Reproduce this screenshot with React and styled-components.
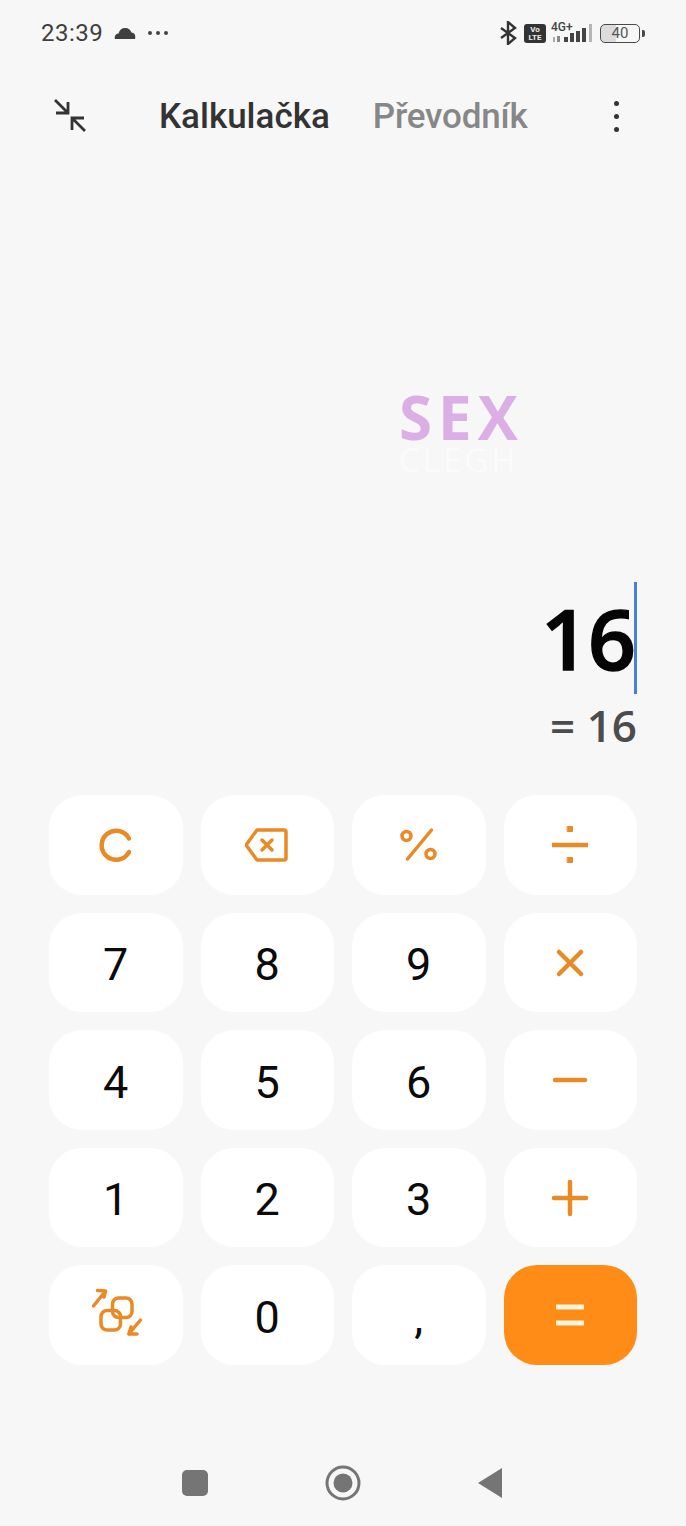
import React from 'react';
import styled, { createGlobalStyle } from 'styled-components';

const orange = '#e98a24';

const GlobalStyle = createGlobalStyle`
  html, body {
    margin: 0;
    padding: 0;
    background: #f7f7f7;
  }
  * {
    box-sizing: border-box;
  }
`;

const Screen = styled.div`
  width: 686px;
  height: 1526px;
  background: #f7f7f7;
  display: flex;
  flex-direction: column;
  font-family: Roboto, "Noto Sans", sans-serif;
  overflow: hidden;
`;

const StatusBar = styled.div`
  height: 66px;
  padding: 0 41px 0 41px;
  display: flex;
  align-items: center;
  justify-content: space-between;
`;

const StatusGroup = styled.div`
  display: flex;
  align-items: center;
  gap: ${(p) => p.$gap || 8}px;
`;

const Clock = styled.span`
  font-size: 24px;
  color: #3f3f3f;
  letter-spacing: 0.5px;
`;

const Battery = styled.div`
  width: 40px;
  height: 19px;
  border: 1.6px solid #4a4a4a;
  border-radius: 5px;
  display: flex;
  align-items: center;
  justify-content: center;
  font-size: 15px;
  color: #555;
  background: linear-gradient(90deg, #dcdcdc 40%, #f7f7f7 40%);
`;

const BatteryWrap = styled.div`
  display: flex;
  align-items: center;
  gap: 2px;
  margin-left: 3px;
`;

const BatteryTip = styled.div`
  width: 3px;
  height: 7px;
  background: #4a4a4a;
  border-radius: 0 2px 2px 0;
`;

const Header = styled.div`
  height: 100px;
  padding: 0 54px;
  display: flex;
  align-items: center;
`;

const Tabs = styled.div`
  display: flex;
  gap: 43px;
  margin-left: 73px;
  flex: 1;
`;

const Tab = styled.span`
  font-size: 35px;
  font-weight: 500;
  letter-spacing: ${(p) => (p.$active ? 0 : -0.2)}px;
  color: ${(p) => (p.$active ? '#333333' : '#878787')};
  white-space: nowrap;
`;

const Dots = styled.div`
  display: flex;
  flex-direction: column;
  gap: 8px;
  margin-right: 13px;
`;

const Dot = styled.span`
  width: 5px;
  height: 5px;
  border-radius: 50%;
  background: #333;
`;

const Display = styled.div`
  position: relative;
  flex: 1;
  padding: 0 49px 48px 0;
  display: flex;
  flex-direction: column;
  justify-content: flex-end;
  align-items: flex-end;
`;

const Watermark = styled.div`
  position: absolute;
  left: 399px;
  top: 225px;
  font-family: "Open Sans", sans-serif;
`;

const WatermarkTop = styled.div`
  height: 53px;
  font-size: 60px;
  line-height: 53px;
  font-weight: 700;
  letter-spacing: 6px;
  color: #dcaee6;
`;

const WatermarkSub = styled.div`
  height: 31px;
  font-size: 33px;
  line-height: 31px;
  letter-spacing: 3px;
  color: #fbfbfb;
`;

const Expression = styled.div`
  display: flex;
  align-items: center;
  height: 112px;
`;

const ExpressionText = styled.span`
  font-family: "Open Sans", sans-serif;
  font-size: 84px;
  font-weight: 600;
  -webkit-text-stroke: 1.4px #050505;
  color: #050505;
  line-height: 1;
  letter-spacing: -1px;
`;

const Caret = styled.span`
  width: 3px;
  height: 112px;
  background: #4a7fd6;
  margin-left: -1px;
`;

const Result = styled.div`
  font-family: "Open Sans", sans-serif;
  font-size: 44px;
  font-weight: 600;
  line-height: 1;
  color: #4c4c4c;
  margin-top: 9px;
`;

const Keypad = styled.div`
  padding: 0 49px;
  display: grid;
  grid-template-columns: repeat(4, 1fr);
  grid-auto-rows: 99.6px;
  gap: 18px;
`;

const Key = styled.button`
  border: 0;
  padding: 0;
  border-radius: 33px;
  background: ${(p) => (p.$primary ? '#ff8c17' : '#ffffff')};
  color: ${(p) => (p.$accent ? orange : '#0b0b0b')};
  font-family: Roboto, sans-serif;
  font-size: 45px;
  font-weight: 400;
  display: flex;
  align-items: center;
  justify-content: center;
`;

const KeyLabel = styled.span`
  margin-top: 4px;
`;

const NavBar = styled.div`
  height: 161px;
  padding: 100px 183px 25px 182px;
  display: flex;
  align-items: center;
  justify-content: space-between;
`;

const Icon = ({ size = 44, color = orange, width = 4.5, children }) => (
  <svg
    width={size}
    height={size}
    viewBox={`0 0 ${size} ${size}`}
    fill="none"
    stroke={color}
    strokeWidth={width}
    strokeLinecap="round"
    strokeLinejoin="round"
  >
    {children}
  </svg>
);

const keys = [
  { icon: <Icon><path d="M35 15.500A14.500 14.500 0 1 0 35 29" /></Icon> },
  {
    icon: (
      <Icon width={3.5}>
        <path d="M12 7H39a2 2 0 0 1 2 2V35a2 2 0 0 1-2 2H12L1 22z" />
        <path d="M17 17l10 10M27 17L17 27" />
      </Icon>
    ),
  },
  {
    icon: (
      <Icon width={3.5}>
        <circle cx="9.500" cy="13" r="4.500" />
        <circle cx="33.500" cy="31" r="4.500" />
        <path d="M10.500 36L34.500 7" />
      </Icon>
    ),
  },
  {
    icon: (
      <Icon>
        <path d="M4 22h36" strokeLinecap="butt" />
        <rect x="19.500" y="3.500" width="5" height="5" fill={orange} strokeWidth="1" />
        <rect x="19.500" y="34.500" width="5" height="5" fill={orange} strokeWidth="1" />
      </Icon>
    ),
  },
  { label: '7' }, { label: '8' }, { label: '9' },
  { icon: <Icon><path d="M11 12l22 22M33 12L11 34" /></Icon> },
  { label: '4' }, { label: '5' }, { label: '6' },
  { icon: <Icon><path d="M7 22h30" /></Icon> },
  { label: '1' }, { label: '2' }, { label: '3' },
  { icon: <Icon><path d="M22 6v32M6 22h32" /></Icon> },
  {
    icon: (
      <Icon size={56} width={3.5}>
        <rect x="13" y="23.500" width="19.500" height="19.500" rx="6" />
        <rect x="24.500" y="11" width="19.500" height="19.500" rx="6" />
        <path d="M5.500 19L17.500 4M9.500 3.500l8 .5-1.500 6" />
        <path d="M52.500 33L40.800 47M49 47h-8.200l2.200-7" />
      </Icon>
    ),
  },
  { label: '0' },
  { label: ',' },
  {
    primary: true,
    icon: <Icon color="#fff3de" width={5}><path d="M8 14h28M8 30h28" strokeLinecap="butt" /></Icon>,
  },
];

const App = () => (
  <>
    <GlobalStyle />
    <Screen>
      <StatusBar>
        <StatusGroup $gap={11}>
          <Clock>23:39</Clock>
          <svg width="22" height="15" viewBox="0 0 24 16">
            <path d="M1 14c-1-4 2-6 4-6 1-4 4-6 7-6 4 0 6 2 7 5 3 0 5 3 4 7z" fill="#3f3f3f" />
          </svg>
          <svg width="22" height="6" viewBox="0 0 22 6">
            <circle cx="3" cy="3" r="2" fill="#444" />
            <circle cx="11" cy="3" r="2" fill="#444" />
            <circle cx="19" cy="3" r="2" fill="#444" />
          </svg>
        </StatusGroup>
        <StatusGroup $gap={5}>
          <svg width="18" height="24" viewBox="0 0 18 24" fill="none" stroke="#333" strokeWidth="2.400" style={{ marginRight: 2 }}>
            <path d="M2 7l14 10-7 6V1l7 6L2 17" />
          </svg>
          <svg width="22" height="19" viewBox="0 0 22 19">
            <rect width="22" height="19" rx="3" fill="#333" />
            <text x="11" y="8" fontSize="8" fontWeight="700" fill="#eee" textAnchor="middle" fontFamily="Roboto">Vo</text>
            <text x="11" y="16" fontSize="8" fontWeight="700" fill="#eee" textAnchor="middle" fontFamily="Roboto">LTE</text>
          </svg>
          <svg width="41" height="24" viewBox="0 0 41 24">
            <text x="0" y="10" fontSize="12" fontWeight="500" fill="#444" fontFamily="Roboto">4G+</text>
            <rect x="2" y="16" width="2" height="5" fill="#aaa" />
            <rect x="6" y="15" width="3" height="6" fill="#888" />
            <rect x="13" y="16" width="4" height="5" fill="#444" />
            <rect x="19" y="12" width="4" height="9" fill="#444" />
            <rect x="25" y="10" width="4" height="11" fill="#444" />
            <rect x="31" y="7" width="4" height="14" fill="#444" />
            <rect x="38" y="3" width="3" height="18" fill="#b5b5b5" />
          </svg>
          <BatteryWrap>
            <Battery>40</Battery>
            <BatteryTip />
          </BatteryWrap>
        </StatusGroup>
      </StatusBar>

      <Header>
        <svg width="32" height="34" viewBox="0 0 32 34" fill="none" stroke="#333" strokeWidth="2.800" style={{ flexShrink: 0 }}>
          <path d="M1 1l13 13M2 14h12V3" />
          <path d="M31 32L18 19M18 31V19h12" />
        </svg>
        <Tabs>
          <Tab $active>Kalkulačka</Tab>
          <Tab>Převodník</Tab>
        </Tabs>
        <Dots>
          <Dot />
          <Dot />
          <Dot />
        </Dots>
      </Header>

      <Display>
        <Watermark>
          <WatermarkTop>SEX</WatermarkTop>
          <WatermarkSub>CLEGH</WatermarkSub>
        </Watermark>
        <Expression>
          <ExpressionText>16</ExpressionText>
          <Caret />
        </Expression>
        <Result>= 16</Result>
      </Display>

      <Keypad>
        {keys.map((key, index) => (
          <Key key={index} $accent={!!key.icon} $primary={key.primary}>
            {key.icon || <KeyLabel>{key.label}</KeyLabel>}
          </Key>
        ))}
      </Keypad>

      <NavBar>
        <svg width="26" height="26" viewBox="0 0 26 26">
          <rect width="26" height="26" rx="5" fill="#757575" />
        </svg>
        <svg width="36" height="36" viewBox="0 0 36 36">
          <circle cx="18" cy="18" r="16" fill="none" stroke="#757575" strokeWidth="3" />
          <circle cx="18" cy="18" r="9.500" fill="#757575" />
        </svg>
        <svg width="25" height="30" viewBox="0 0 25 30">
          <path d="M0 15L24 0v30z" fill="#757575" />
        </svg>
      </NavBar>
    </Screen>
  </>
);

export default App;
